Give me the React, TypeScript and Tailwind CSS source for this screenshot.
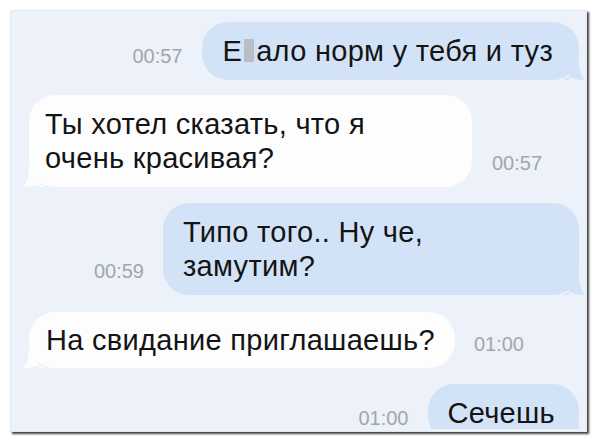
import React from "react";

const font = { fontFamily: '"Liberation Sans", Arial, "Noto Sans", sans-serif' };

function OutTail() {
  return (
    <svg
      className="absolute right-[-6px] bottom-0 overflow-visible"
      width="16"
      height="20"
      viewBox="0 0 16 20"
    >
      <path d="M0 0 H10 C10 9 12 16 16 20 C 10 20 4 19 0 17 L-6 20 H0 Z" fill="#d3e3f7" />
    </svg>
  );
}

function InTail() {
  return (
    <svg
      className="absolute left-[-6px] bottom-0 overflow-visible"
      width="16"
      height="20"
      viewBox="0 0 16 20"
    >
      <path d="M16 0 H6 C6 9 4 16 0 20 C 6 20 12 19 16 17 L22 20 H16 Z" fill="#fdfdfe" />
    </svg>
  );
}

function Time({ t }: { t: string }) {
  return (
    <span className="text-[20px] leading-[20px] tracking-normal text-[#a2a6ad] mb-[14px] shrink-0">{t}</span>
  );
}

export default function App() {
  return (
    <div className="w-[600px] h-[443px] bg-white pt-[10px] pl-[10px]" style={font}>
      <div className="w-[577px] h-[422px] bg-[#edf1f9] shadow-[2px_2px_2px_rgba(0,0,0,0.75)] border border-[#e3e7ee] overflow-hidden">
        <div className="h-[418px] overflow-hidden pt-[11px] pl-[18px] pr-[7px] flex flex-col text-[29px] leading-[34px] tracking-[0.3px] text-[#141414]">
          {/* 1 outgoing */}
          <div className="flex justify-end items-end gap-[19px]">
            <Time t="00:57" />
            <div className="relative bg-[#d3e3f7] rounded-[26px] pl-[21px] pr-[26px] py-[12px] whitespace-nowrap">
              <span>Е</span>
              <span className="inline-block w-[10px] h-[23px] bg-[#b9bdc4] mx-[2px] align-[-1px]" />
              <span>ало норм у тебя и туз</span>
              <OutTail />
            </div>
          </div>

          {/* 2 incoming */}
          <div className="flex items-end gap-[20px] mt-[15px]">
            <div className="relative bg-[#fdfdfe] rounded-[26px] pl-[16px] pr-[20px] py-[12px] w-[443px]">
              Ты хотел сказать, что я
              <br />
              очень красивая?
              <InTail />
            </div>
            <Time t="00:57" />
          </div>

          {/* 3 outgoing */}
          <div className="flex justify-end items-end gap-[19px] mt-[16px]">
            <Time t="00:59" />
            <div className="relative bg-[#d3e3f7] rounded-[26px] pl-[20px] pr-[20px] py-[12px] w-[416px]">
              Типо того.. Ну че,
              <br />
              замутим?
              <OutTail />
            </div>
          </div>

          {/* 4 incoming */}
          <div className="flex items-end gap-[19px] mt-[17px]">
            <div className="relative bg-[#fdfdfe] rounded-[26px] pl-[17px] pr-[20px] py-[11px] whitespace-nowrap">
              На свидание приглашаешь?
              <InTail />
            </div>
            <Time t="01:00" />
          </div>

          {/* 5 outgoing */}
          <div className="flex justify-end items-end gap-[20px] mt-[16px]">
            <Time t="01:00" />
            <div className="relative bg-[#d3e3f7] rounded-[26px] pl-[19px] pr-[24px] py-[12px] whitespace-nowrap">
              Сечешь
              <OutTail />
            </div>
          </div>
        </div>
      </div>
    </div>
  );
}
